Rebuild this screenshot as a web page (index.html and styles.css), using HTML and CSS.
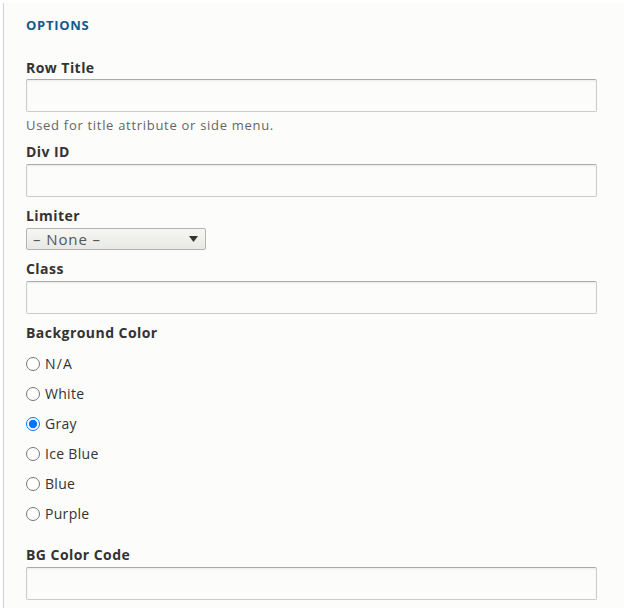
FILE: index.html
```html
<!DOCTYPE html>
<html>
<head>
<meta charset="utf-8">
<link rel="stylesheet" href="styles.css">
</head>
<body>
<div class="panel">
  <div class="legend">OPTIONS</div>

  <div class="field first">
    <label class="label">Row Title</label>
    <input class="text" type="text">
    <div class="desc">Used for title attribute or side menu.</div>
  </div>

  <div class="field after-desc">
    <label class="label">Div ID</label>
    <input class="text" type="text">
  </div>

  <div class="field">
    <label class="label">Limiter</label>
    <div class="select">
      <span class="select-text">– None –</span>
      <svg class="arrow" width="9" height="6" viewBox="0 0 9 6"><path d="M0 0H9L4.5 6Z" fill="#333"/></svg>
    </div>
  </div>

  <div class="field">
    <label class="label">Class</label>
    <input class="text" type="text">
  </div>

  <div class="field">
    <div class="label">Background Color</div>
    <div class="radios">
      <label class="radio"><input type="radio" name="bg"><span class="wide">N/A</span></label>
      <label class="radio"><input type="radio" name="bg"><span>White</span></label>
      <label class="radio"><input type="radio" name="bg" checked><span>Gray</span></label>
      <label class="radio"><input type="radio" name="bg"><span>Ice Blue</span></label>
      <label class="radio"><input type="radio" name="bg"><span>Blue</span></label>
      <label class="radio"><input type="radio" name="bg"><span>Purple</span></label>
    </div>
  </div>

  <div class="field after-radios">
    <label class="label">BG Color Code</label>
    <input class="text" type="text">
  </div>
</div>
</body>
</html>
```

FILE: styles.css
```css
html, body {
  margin: 0;
  padding: 0;
  background: #ffffff;
}

body {
  font-family: "Open Sans", "DejaVu Sans", sans-serif;
  color: #333333;
  width: 624px;
  height: 614px;
  overflow: hidden;
}

.panel {
  margin: 3px 0 0 3px;
  border-left: 1px solid #cfd3d6;
  background: #fcfcfa;
  padding: 13px 27px 8px 22px;
  display: flex;
  flex-direction: column;
}

.legend {
  font-size: 13px;
  line-height: 18px;
  font-weight: 700;
  color: #135a8c;
  letter-spacing: 0.7px;
  text-transform: uppercase;
}

.field {
  display: flex;
  flex-direction: column;
  align-items: flex-start;
  margin-top: 10px;
}

.field.first {
  margin-top: 25px;
}

.field.after-desc {
  margin-top: 9px;
}

.field.after-radios {
  margin-top: 17px;
}

.label {
  display: block;
  font-size: 14px;
  line-height: 18px;
  font-weight: 700;
  color: #333333;
  letter-spacing: 0.45px;
  margin-bottom: 3px;
}

.field.first .label {
  margin-bottom: 2px;
}

.text {
  box-sizing: border-box;
  width: 571px;
  height: 33px;
  margin: 0;
  padding: 4px 6px;
  border: 1px solid #cccccc;
  border-top-color: #aaaaaa;
  border-radius: 2px;
  background: #fcfcfa;
  box-shadow: inset 0 1px 2px rgba(0, 0, 0, 0.08);
  font-family: inherit;
  font-size: 13px;
}

.desc {
  margin-top: 4px;
  font-size: 13px;
  line-height: 18px;
  color: #666666;
  letter-spacing: 0.7px;
}

.select {
  box-sizing: border-box;
  width: 180px;
  height: 22px;
  display: flex;
  align-items: center;
  justify-content: space-between;
  padding: 0 7px 0 6px;
  border: 1px solid #b3b3b3;
  border-radius: 2px;
  background: linear-gradient(#f6f6f3, #e8e8e4);
  font-size: 15px;
  color: #555555;
}

.select-text {
  line-height: 18px;
  letter-spacing: 0.9px;
}

.arrow {
  display: block;
}

.radios {
  display: flex;
  flex-direction: column;
  margin-top: 4px;
}

.radio {
  display: flex;
  align-items: center;
  height: 30px;
  font-size: 14px;
  color: #333333;
}

.radio input {
  width: 14px;
  height: 14px;
  margin: 0 5px 0 0;
}

.radio span {
  line-height: 18px;
  letter-spacing: 0.3px;
}

.radio span.wide {
  letter-spacing: 1.2px;
}
```
